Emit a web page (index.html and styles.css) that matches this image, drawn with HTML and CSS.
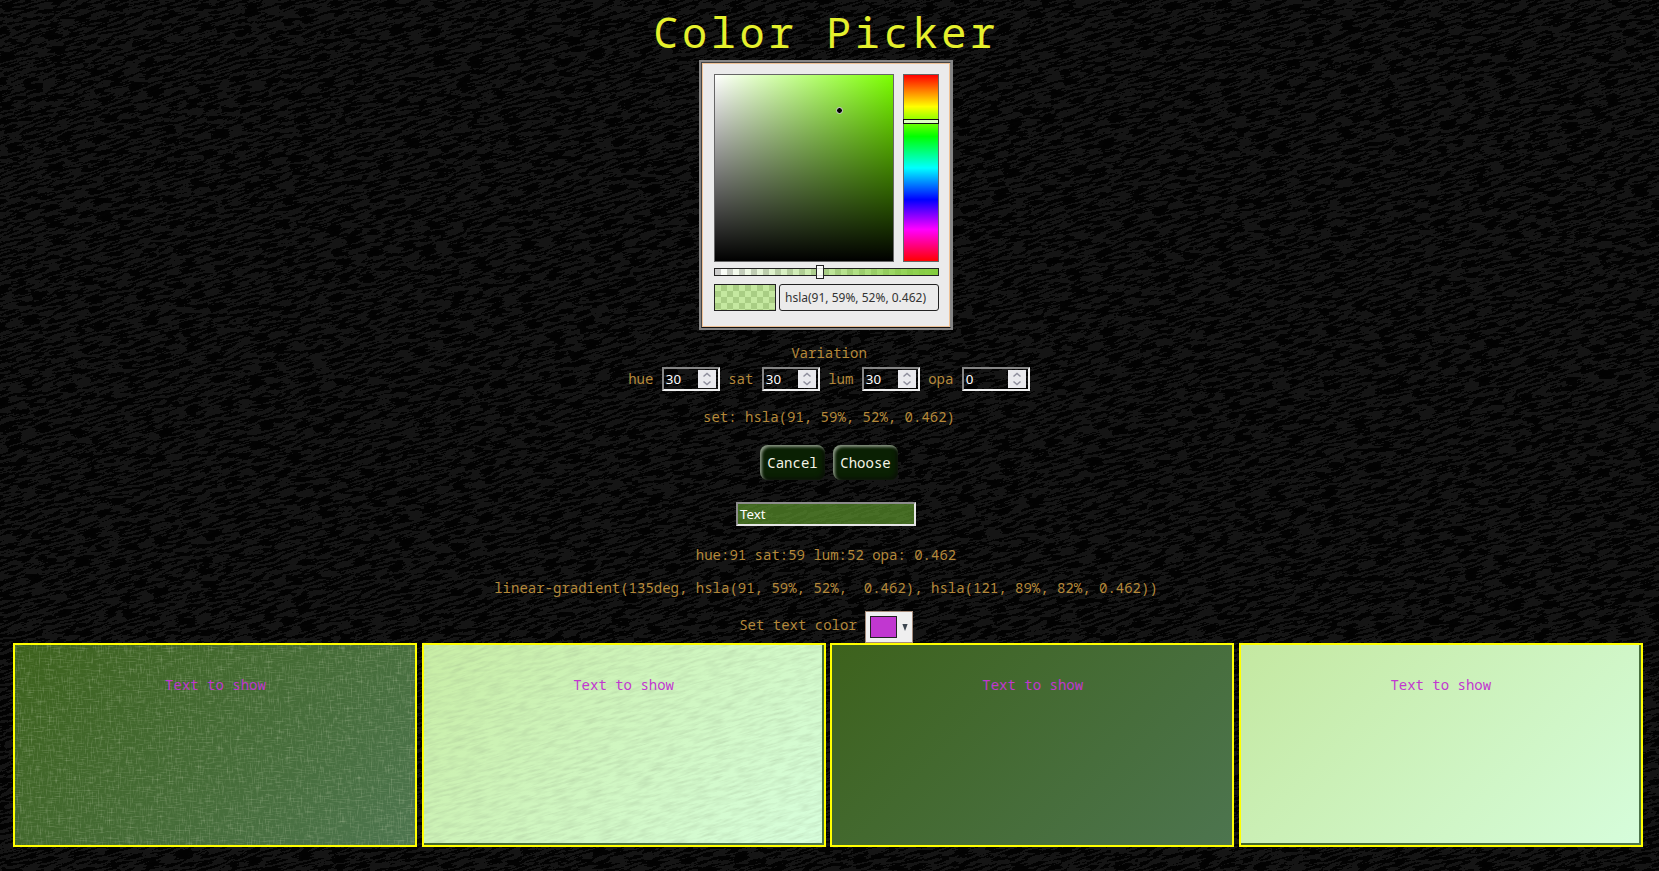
FILE: index.html
```
<!DOCTYPE html>
<html lang="en">
<head>
<meta charset="utf-8">
<title>Color Picker</title>
<link rel="stylesheet" href="styles.css">
</head>
<body>
<main class="page">
  <h1 class="title">Color Picker</h1>
  <section class="picker">
    <div class="picker-top">
      <div class="shade"><span class="shade-dot"></span></div>
      <div class="hue"><span class="hue-thumb"></span></div>
    </div>
    <div class="alpha"><span class="alpha-thumb"></span></div>
    <div class="picker-bottom">
      <div class="preview"></div>
      <div class="value">hsla(91, 59%, 52%, 0.462)</div>
    </div>
  </section>
  <p class="line variation shifted">Variation</p>
  <div class="fields shifted">
    <span class="label">hue</span>
    <span class="number">30<svg class="spin" viewBox="0 0 18 18"><path d="M5.5 6.5 9 3.5l3.5 3M5.5 11.5 9 14.5l3.5-3"/></svg></span>
    <span class="label">sat</span>
    <span class="number">30<svg class="spin" viewBox="0 0 18 18"><path d="M5.5 6.5 9 3.5l3.5 3M5.5 11.5 9 14.5l3.5-3"/></svg></span>
    <span class="label">lum</span>
    <span class="number">30<svg class="spin" viewBox="0 0 18 18"><path d="M5.5 6.5 9 3.5l3.5 3M5.5 11.5 9 14.5l3.5-3"/></svg></span>
    <span class="label">opa</span>
    <span class="number wide">0<svg class="spin" viewBox="0 0 18 18"><path d="M5.5 6.5 9 3.5l3.5 3M5.5 11.5 9 14.5l3.5-3"/></svg></span>
  </div>
  <p class="line set shifted">set: hsla(91, 59%, 52%, 0.462)</p>
  <div class="buttons shifted">
    <button class="btn">Cancel</button>
    <button class="btn">Choose</button>
  </div>
  <div class="text-input">Text</div>
  <p class="line values">hue:91 sat:59 lum:52 opa: 0.462</p>
  <p class="line gradient">linear-gradient(135deg, hsla(91, 59%, 52%,&nbsp; 0.462), hsla(121, 89%, 82%, 0.462))</p>
  <div class="text-color">
    <span>Set text color</span>
    <div class="select"><span class="swatch"></span><svg class="arrow" viewBox="0 0 6 8"><path d="M0 0h6L3 8z"/></svg></div>
  </div>
  <section class="cards">
    <div class="card dark cloth">Text to show</div>
    <div class="card light"><div class="fill grain">Text to show</div></div>
    <div class="card dark">Text to show</div>
    <div class="card light"><div class="fill">Text to show</div></div>
  </section>
</main>
</body>
</html>
```
FILE: styles.css
```
* { box-sizing: border-box; }

body {
  margin: 0;
  height: 871px;
  overflow: hidden;
  color: #b5893a;
  font: 14px/20px "Noto Sans Mono", "DejaVu Sans Mono", monospace;
  background: #0c0c0c url("data:image/svg+xml,%3Csvg xmlns='http://www.w3.org/2000/svg' width='1659' height='871'%3E%3Cfilter id='n' x='0' y='0' width='1' height='1' color-interpolation-filters='sRGB'%3E%3CfeTurbulence type='fractalNoise' baseFrequency='.06 .46' numOctaves='3' seed='4'/%3E%3CfeColorMatrix values='1 0 0 0 0 1 0 0 0 0 1 0 0 0 0 0 0 0 0 1'/%3E%3CfeComponentTransfer%3E%3CfeFuncR type='discrete' tableValues='.01 .01 .01 .01 .015 .085 .085 .085 .085 .085'/%3E%3CfeFuncG type='discrete' tableValues='.01 .01 .01 .01 .015 .085 .085 .085 .085 .085'/%3E%3CfeFuncB type='discrete' tableValues='.01 .01 .01 .01 .015 .085 .085 .085 .085 .085'/%3E%3C/feComponentTransfer%3E%3C/filter%3E%3Crect x='-400' y='-100' width='2400' height='1700' transform='rotate(-16)' filter='url(%23n)'/%3E%3C/svg%3E");
}

.page {
  display: flex;
  flex-direction: column;
  align-items: center;
  width: 1652px;
}

.shifted { padding-left: 6px; }

.title {
  margin: 0;
  height: 60px;
  color: #e5f02c;
  font-size: 42px;
  font-weight: 400;
  line-height: 64px;
  letter-spacing: 3.6px;
}

.picker {
  width: 254px;
  height: 270px;
  padding: 11px 11px 0 12px;
  border: 3px solid;
  border-color: #444 #858585 #111 #444;
  outline: 2px solid #858585;
  outline-offset: -2px;
  background: #ebebeb;
  box-shadow: inset 0 0 0 1px #efc296;
}

.picker-top { display: flex; gap: 9px; }

.shade {
  position: relative;
  width: 180px;
  height: 188px;
  border: 1px solid #666;
  background: linear-gradient(transparent, #000), linear-gradient(90deg, #fff, #7bff00);
}

.shade-dot {
  position: absolute;
  left: 121px;
  top: 32px;
  width: 7px;
  height: 7px;
  border: 1px solid #ddd;
  border-radius: 50%;
  background: #000;
}

.hue {
  position: relative;
  width: 36px;
  height: 188px;
  border: 1px solid #666;
  background: linear-gradient(red, #ff0 17%, #0f0 33%, #0ff 50%, #00f 67%, #f0f 83%, red);
}

.hue-thumb {
  position: absolute;
  left: -1px;
  top: 44px;
  width: 36px;
  height: 5px;
  border: 1px solid #111;
  background: #dcffbe;
}

.alpha {
  position: relative;
  width: 225px;
  height: 8px;
  margin-top: 6px;
  border: 1px solid #222;
  background: linear-gradient(90deg, transparent, #83cd3c), repeating-conic-gradient(#fff 0 25%, #ccc 0 50%) 0 0 / 12px 12px;
}

.alpha-thumb {
  position: absolute;
  left: 101px;
  top: -4px;
  width: 8px;
  height: 14px;
  border: 1px solid #222;
  background: rgba(255, 255, 255, .85);
}

.picker-bottom { display: flex; gap: 3px; margin-top: 8px; }

.preview {
  width: 62px;
  height: 27px;
  border: 1px solid #222;
  background:
    repeating-conic-gradient(#c5e8a0 0 25%, #a9cd84 0 50%) 30px 0 / 12px 12px;
}

.value {
  width: 160px;
  height: 27px;
  padding-left: 5px;
  border: 1px solid #222;
  border-radius: 3px;
  color: #333;
  font: 12px/25px "Noto Sans", sans-serif;
}

.line { margin: 0; height: 20px; white-space: pre; }
.variation { margin-top: 13px; }
.set { margin-top: 16px; }
.values { margin-top: 19px; }
.gradient { margin-top: 13px; }

.fields {
  display: flex;
  align-items: center;
  height: 24px;
  margin-top: 4px;
}

.label { width: 33.6px; }

.number {
  display: flex;
  align-items: center;
  justify-content: space-between;
  width: 58px;
  height: 24px;
  margin-right: 8.4px;
  padding: 0 2px;
  border: 2px solid;
  border-color: #858585 #efefef #efefef #858585;
  color: #fff;
  font: 13.3px/20px "Noto Sans", sans-serif;
}

.number.wide { width: 68px; margin-right: 0; }
.spin { width: 18px; height: 18px; background: #e9e9ed; fill: none; stroke: #8f8f9d; stroke-width: 1.5; }

.buttons { display: flex; gap: 8px; margin-top: 18px; }

.btn {
  width: 65px;
  height: 35px;
  padding: 0;
  border: 0;
  border-radius: 8px;
  background: #0a2003;
  box-shadow: inset 2px 2px 3px #8b9785, inset -2px -2px 4px #0a1007;
  color: #f4f4e8;
  font: inherit;
}

.text-input {
  width: 180px;
  height: 24px;
  margin-top: 22px;
  padding-left: 2px;
  border: 2px solid;
  border-color: #8c8c8c #e5e5e5 #e5e5e5 #8c8c8c;
  background: rgba(92, 148, 46, .7);
  color: #fff;
  font: 13.3px/20px "Noto Sans", sans-serif;
}

.text-color { display: flex; gap: 8px; height: 32px; margin-top: 13px; line-height: 28px; }

.select {
  display: flex;
  align-items: center;
  gap: 5px;
  width: 48px;
  height: 32px;
  padding: 0 4px;
  border: 1px solid #a58b7a;
  background: #efefef;
}

.swatch { width: 27px; height: 22px; border: 1px solid #222; background: #c137d0; }
.arrow { width: 6px; height: 7px; fill: #3d4650; }

.cards { display: flex; gap: 4.6px; width: 1630px; margin-left: 4px; color: #c137d0; }

.card {
  flex: none;
  width: 404px;
  height: 204px;
  padding-left: 1px;
  border: 2px solid #ff0;
  text-align: center;
  line-height: 80px;
}

.dark { background: linear-gradient(135deg, #3d621c, #4d754f); }
.light { background: linear-gradient(135deg, #3d621c, #4d754f); padding: 0 2px 2px 0; }
.fill { height: 100%; padding-left: 2px; background: linear-gradient(135deg, #c4e8a1, #d6fddb); }

/* Woven threads: one horizontal and one vertical noise layer */
.cloth {
  background:
    url("data:image/svg+xml,%3Csvg xmlns='http://www.w3.org/2000/svg' width='400' height='200'%3E%3Cfilter id='h' x='0' y='0' width='1' height='1'%3E%3CfeTurbulence type='fractalNoise' baseFrequency='.1 .9' numOctaves='2' seed='3'/%3E%3CfeColorMatrix values='0 0 0 0 .5 0 0 0 0 .6 0 0 0 0 .4 2.2 0 0 0 -1.12'/%3E%3C/filter%3E%3Cfilter id='v' x='0' y='0' width='1' height='1'%3E%3CfeTurbulence type='fractalNoise' baseFrequency='.9 .1' numOctaves='2' seed='8'/%3E%3CfeColorMatrix values='0 0 0 0 .5 0 0 0 0 .6 0 0 0 0 .4 2.2 0 0 0 -1.12'/%3E%3C/filter%3E%3Crect width='400' height='200' filter='url(%23h)' opacity='.35'/%3E%3Crect width='400' height='200' filter='url(%23v)' opacity='.35'/%3E%3C/svg%3E"),
    linear-gradient(135deg, #3d621c, #4d754f);
}

.grain {
  background:
    url("data:image/svg+xml,%3Csvg xmlns='http://www.w3.org/2000/svg' width='400' height='200'%3E%3Cfilter id='g' x='0' y='0' width='1' height='1'%3E%3CfeTurbulence type='fractalNoise' baseFrequency='.06 .4' numOctaves='3' seed='6'/%3E%3CfeColorMatrix values='0 0 0 0 .3 0 0 0 0 .4 0 0 0 0 .25 .6 0 0 0 -.23'/%3E%3C/filter%3E%3Crect x='-100' y='-20' width='600' height='400' transform='rotate(-16)' filter='url(%23g)'/%3E%3C/svg%3E"),
    linear-gradient(135deg, #c8eda5, #d8ffdd);
}
```
